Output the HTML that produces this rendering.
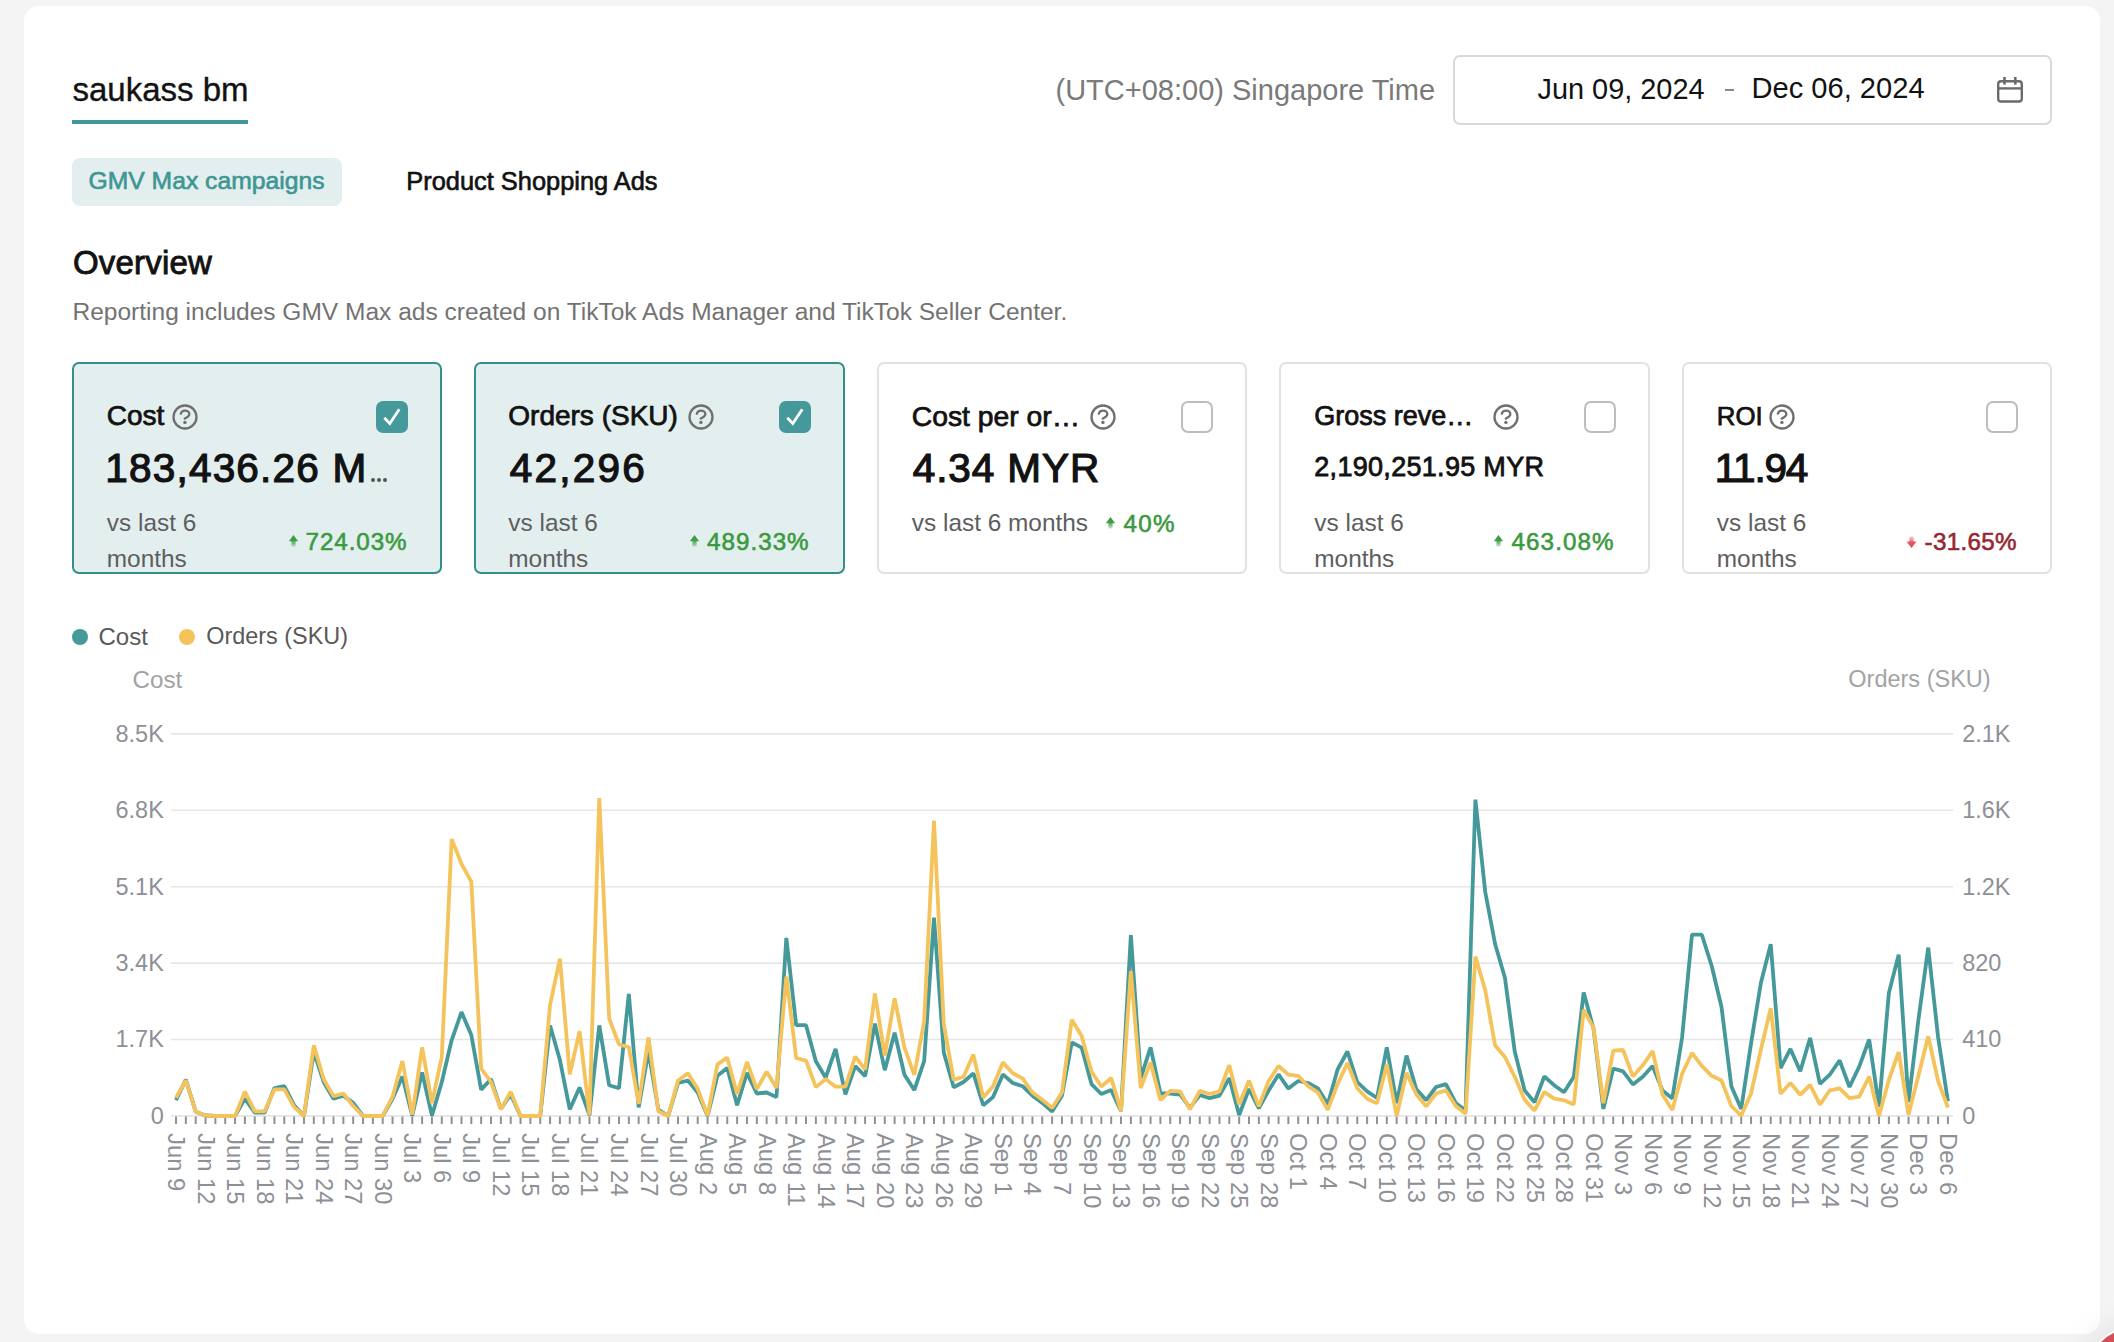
<!DOCTYPE html>
<html><head><meta charset="utf-8">
<style>
html,body{margin:0;padding:0;}
body{width:2114px;height:1342px;overflow:hidden;background:#f4f4f4;position:relative;font-family:"Liberation Sans", sans-serif;}
.t{position:absolute;line-height:1;white-space:nowrap;}
.card{position:absolute;left:24px;top:6px;width:2076px;height:1328px;border-radius:15px;background:#fff;}
.kpi{position:absolute;top:362px;height:212px;box-sizing:border-box;border-radius:7px;border:2px solid #e2e2e2;background:#fff;}
.kpi.sel{border-color:#358e8b;background:#e3efef;}
.cb{position:absolute;top:401px;width:32px;height:32px;box-sizing:border-box;border-radius:7px;}
.cb.on{background:#45999a;}
.cb.off{border:2px solid #bdbdbd;background:#fff;}
.q{position:absolute;top:404.5px;width:24.6px;height:24.6px;box-sizing:border-box;border:2px solid #6f6f6f;border-radius:50%;}
</style></head><body>
<div class="card"></div>
<div class="t" style="left:72.5px;top:73.3px;font-size:33px;color:#121212;font-weight:normal;-webkit-text-stroke:0.35px #121212;">saukass bm</div>
<div style="position:absolute;left:72px;top:120px;width:176px;height:4px;background:#41979a;"></div>
<div class="t" style="left:1055.5px;top:75.5px;font-size:29px;color:#7a7a7a;font-weight:normal;">(UTC+08:00) Singapore Time</div>
<div style="position:absolute;left:1452.5px;top:54.5px;width:599.5px;height:70.8px;box-sizing:border-box;border:2px solid #d9d9d9;border-radius:7px;"></div>
<div class="t" style="left:1537.5px;top:74.5px;font-size:28.9px;color:#121212;font-weight:normal;">Jun 09, 2024</div>
<div style="position:absolute;left:1725px;top:89.3px;width:9px;height:2.2px;background:#8a8a8a;"></div>
<div class="t" style="left:1751.5px;top:74.4px;font-size:29.1px;color:#121212;font-weight:normal;">Dec 06, 2024</div>
<svg style="position:absolute;left:1990px;top:70px" width="40" height="40" viewBox="1990 70 40 40">
<rect x="1998.2" y="81.2" width="23.6" height="20.3" rx="2.8" fill="none" stroke="#6b6b6b" stroke-width="2.4"/>
<line x1="1998" y1="88.4" x2="2022" y2="88.4" stroke="#6b6b6b" stroke-width="2.4"/>
<line x1="2004.5" y1="77" x2="2004.5" y2="84.6" stroke="#6b6b6b" stroke-width="2.6"/>
<line x1="2015.3" y1="77" x2="2015.3" y2="84.6" stroke="#6b6b6b" stroke-width="2.6"/>
</svg>
<div style="position:absolute;left:72px;top:158px;width:269.5px;height:48px;border-radius:8px;background:#e3efef;"></div>
<div class="t" style="left:88.5px;top:169.4px;font-size:24.7px;color:#3f9693;font-weight:normal;-webkit-text-stroke:0.65px #3f9693;">GMV Max campaigns</div>
<div class="t" style="left:406.3px;top:168.8px;font-size:25.4px;color:#121212;font-weight:normal;-webkit-text-stroke:0.65px #121212;">Product Shopping Ads</div>
<div class="t" style="left:73.0px;top:245.6px;font-size:33px;color:#121212;font-weight:normal;-webkit-text-stroke:0.9px #121212;letter-spacing:0.2px;">Overview</div>
<div class="t" style="left:72.5px;top:299.6px;font-size:24.53px;color:#737373;font-weight:normal;">Reporting includes GMV Max ads created on TikTok Ads Manager and TikTok Seller Center.</div>
<div class="kpi sel" style="left:72.0px;width:370.4px;"></div>
<div class="t" style="left:106.8px;top:402.0px;font-size:28px;color:#121212;font-weight:normal;-webkit-text-stroke:0.75px #121212;">Cost</div>
<svg style="position:absolute;left:169.90px;top:401.70px" width="30" height="30" viewBox="-15 -15 30 30"><circle cx="0" cy="0" r="11.5" fill="none" stroke="#6f6f6f" stroke-width="2.3"/><path d="M -4.2 -3.3 C -3.6 -5.6 -1.9 -6.3 0.1 -6.3 C 2.6 -6.3 4.3 -4.7 4.3 -2.8 C 4.3 -0.5 1.8 0.2 -0.3 1.6" fill="none" stroke="#6f6f6f" stroke-width="2.3" stroke-linecap="round"/><circle cx="-0.1" cy="5.4" r="1.7" fill="#6f6f6f"/></svg>
<div class="cb on" style="left:376.0px;"><svg width="32" height="32" viewBox="0 0 32 32" style="position:absolute;left:0;top:0"><path d="M8.3 16.7 L13.8 22.6 L23.3 8.3" fill="none" stroke="#fff" stroke-width="2.8" stroke-linecap="butt" stroke-linejoin="miter"/></svg></div>
<div class="kpi sel" style="left:474.4px;width:370.4px;"></div>
<div class="t" style="left:508.3px;top:402.0px;font-size:28px;color:#121212;font-weight:normal;-webkit-text-stroke:0.75px #121212;">Orders (SKU)</div>
<svg style="position:absolute;left:685.90px;top:401.70px" width="30" height="30" viewBox="-15 -15 30 30"><circle cx="0" cy="0" r="11.5" fill="none" stroke="#6f6f6f" stroke-width="2.3"/><path d="M -4.2 -3.3 C -3.6 -5.6 -1.9 -6.3 0.1 -6.3 C 2.6 -6.3 4.3 -4.7 4.3 -2.8 C 4.3 -0.5 1.8 0.2 -0.3 1.6" fill="none" stroke="#6f6f6f" stroke-width="2.3" stroke-linecap="round"/><circle cx="-0.1" cy="5.4" r="1.7" fill="#6f6f6f"/></svg>
<div class="cb on" style="left:778.8px;"><svg width="32" height="32" viewBox="0 0 32 32" style="position:absolute;left:0;top:0"><path d="M8.3 16.7 L13.8 22.6 L23.3 8.3" fill="none" stroke="#fff" stroke-width="2.8" stroke-linecap="butt" stroke-linejoin="miter"/></svg></div>
<div class="kpi" style="left:876.8px;width:370.4px;"></div>
<div class="t" style="left:911.8px;top:401.7px;font-size:28.3px;color:#121212;font-weight:normal;-webkit-text-stroke:0.75px #121212;">Cost per or…</div>
<svg style="position:absolute;left:1088.10px;top:401.70px" width="30" height="30" viewBox="-15 -15 30 30"><circle cx="0" cy="0" r="11.5" fill="none" stroke="#6f6f6f" stroke-width="2.3"/><path d="M -4.2 -3.3 C -3.6 -5.6 -1.9 -6.3 0.1 -6.3 C 2.6 -6.3 4.3 -4.7 4.3 -2.8 C 4.3 -0.5 1.8 0.2 -0.3 1.6" fill="none" stroke="#6f6f6f" stroke-width="2.3" stroke-linecap="round"/><circle cx="-0.1" cy="5.4" r="1.7" fill="#6f6f6f"/></svg>
<div class="cb off" style="left:1181.0px;"></div>
<div class="kpi" style="left:1279.2px;width:370.4px;"></div>
<div class="t" style="left:1314.3px;top:402.8px;font-size:27px;color:#121212;font-weight:normal;-webkit-text-stroke:0.75px #121212;">Gross reve…</div>
<svg style="position:absolute;left:1491.00px;top:401.70px" width="30" height="30" viewBox="-15 -15 30 30"><circle cx="0" cy="0" r="11.5" fill="none" stroke="#6f6f6f" stroke-width="2.3"/><path d="M -4.2 -3.3 C -3.6 -5.6 -1.9 -6.3 0.1 -6.3 C 2.6 -6.3 4.3 -4.7 4.3 -2.8 C 4.3 -0.5 1.8 0.2 -0.3 1.6" fill="none" stroke="#6f6f6f" stroke-width="2.3" stroke-linecap="round"/><circle cx="-0.1" cy="5.4" r="1.7" fill="#6f6f6f"/></svg>
<div class="cb off" style="left:1584.2px;"></div>
<div class="kpi" style="left:1681.6px;width:370.4px;"></div>
<div class="t" style="left:1716.8px;top:403.9px;font-size:25.8px;color:#121212;font-weight:normal;-webkit-text-stroke:0.75px #121212;">ROI</div>
<svg style="position:absolute;left:1767.00px;top:401.70px" width="30" height="30" viewBox="-15 -15 30 30"><circle cx="0" cy="0" r="11.5" fill="none" stroke="#6f6f6f" stroke-width="2.3"/><path d="M -4.2 -3.3 C -3.6 -5.6 -1.9 -6.3 0.1 -6.3 C 2.6 -6.3 4.3 -4.7 4.3 -2.8 C 4.3 -0.5 1.8 0.2 -0.3 1.6" fill="none" stroke="#6f6f6f" stroke-width="2.3" stroke-linecap="round"/><circle cx="-0.1" cy="5.4" r="1.7" fill="#6f6f6f"/></svg>
<div class="cb off" style="left:1986.2px;"></div>
<div class="t" style="left:105.3px;top:448.2px;font-size:40.5px;color:#121212;font-weight:normal;-webkit-text-stroke:1.2px #121212;letter-spacing:1.2px;">183,436.26 M</div>
<div class="t" style="left:509.8px;top:448.2px;font-size:40.5px;color:#121212;font-weight:normal;-webkit-text-stroke:1.2px #121212;letter-spacing:2.2px;">42,296</div>
<div class="t" style="left:912.8px;top:448.2px;font-size:40.5px;color:#121212;font-weight:normal;-webkit-text-stroke:1.2px #121212;letter-spacing:0.9px;">4.34 MYR</div>
<div class="t" style="left:1314.3px;top:453.9px;font-size:27px;color:#121212;font-weight:normal;-webkit-text-stroke:0.8px #121212;letter-spacing:0.3px;">2,190,251.95 MYR</div>
<div class="t" style="left:1714.8px;top:448.2px;font-size:40.5px;color:#121212;font-weight:normal;-webkit-text-stroke:1.2px #121212;letter-spacing:-1.2px;">11.94</div>
<div style="position:absolute;left:370.9px;top:478.3px;width:3.8px;height:3.8px;border-radius:50%;background:#555;"></div>
<div style="position:absolute;left:377.0px;top:478.3px;width:3.8px;height:3.8px;border-radius:50%;background:#555;"></div>
<div style="position:absolute;left:382.9px;top:478.3px;width:3.8px;height:3.8px;border-radius:50%;background:#555;"></div>
<div class="t" style="left:106.8px;top:510.9px;font-size:24.4px;color:#5e5e5e;font-weight:normal;">vs last 6</div>
<div class="t" style="left:106.8px;top:546.9px;font-size:24.4px;color:#5e5e5e;font-weight:normal;">months</div>
<div class="t" style="right:1706.6px;top:529.9px;font-size:24.2px;color:#3b9a40;font-weight:normal;text-align:right;-webkit-text-stroke:0.6px #3b9a40;letter-spacing:0.9px;">724.03%</div>
<svg style="position:absolute;left:288.4px;top:534.8px" width="11" height="12" viewBox="0 0 11 12"><defs><linearGradient id="g0" x1="0" y1="0" x2="0" y2="1"><stop offset="0.45" stop-color="#3e9c42"/><stop offset="1" stop-color="#3e9c42" stop-opacity="0.25"/></linearGradient></defs><path d="M5.5 0 L10.2 6.2 L7.6 6.2 L7.6 11.5 L3.4 11.5 L3.4 6.2 L0.8 6.2 Z" fill="url(#g0)"/></svg>
<div class="t" style="left:508.3px;top:510.9px;font-size:24.4px;color:#5e5e5e;font-weight:normal;">vs last 6</div>
<div class="t" style="left:508.3px;top:546.9px;font-size:24.4px;color:#5e5e5e;font-weight:normal;">months</div>
<div class="t" style="right:1304.4px;top:529.9px;font-size:24.2px;color:#3b9a40;font-weight:normal;text-align:right;-webkit-text-stroke:0.6px #3b9a40;letter-spacing:1.0px;">489.33%</div>
<svg style="position:absolute;left:688.6px;top:534.8px" width="11" height="12" viewBox="0 0 11 12"><defs><linearGradient id="g1" x1="0" y1="0" x2="0" y2="1"><stop offset="0.45" stop-color="#3e9c42"/><stop offset="1" stop-color="#3e9c42" stop-opacity="0.25"/></linearGradient></defs><path d="M5.5 0 L10.2 6.2 L7.6 6.2 L7.6 11.5 L3.4 11.5 L3.4 6.2 L0.8 6.2 Z" fill="url(#g1)"/></svg>
<div class="t" style="left:911.8px;top:510.9px;font-size:24.4px;color:#5e5e5e;font-weight:normal;">vs last 6 months</div>
<div class="t" style="left:1123.6px;top:511.9px;font-size:24.2px;color:#3b9a40;font-weight:normal;-webkit-text-stroke:0.6px #3b9a40;letter-spacing:1.3px;">40%</div>
<svg style="position:absolute;left:1105.4px;top:516.5px" width="11" height="12" viewBox="0 0 11 12"><defs><linearGradient id="g2" x1="0" y1="0" x2="0" y2="1"><stop offset="0.45" stop-color="#3e9c42"/><stop offset="1" stop-color="#3e9c42" stop-opacity="0.25"/></linearGradient></defs><path d="M5.5 0 L10.2 6.2 L7.6 6.2 L7.6 11.5 L3.4 11.5 L3.4 6.2 L0.8 6.2 Z" fill="url(#g2)"/></svg>
<div class="t" style="left:1314.3px;top:510.9px;font-size:24.4px;color:#5e5e5e;font-weight:normal;">vs last 6</div>
<div class="t" style="left:1314.3px;top:546.9px;font-size:24.4px;color:#5e5e5e;font-weight:normal;">months</div>
<div class="t" style="right:499.3px;top:529.9px;font-size:24.2px;color:#3b9a40;font-weight:normal;text-align:right;-webkit-text-stroke:0.6px #3b9a40;letter-spacing:1.1px;">463.08%</div>
<svg style="position:absolute;left:1492.5px;top:534.8px" width="11" height="12" viewBox="0 0 11 12"><defs><linearGradient id="g3" x1="0" y1="0" x2="0" y2="1"><stop offset="0.45" stop-color="#3e9c42"/><stop offset="1" stop-color="#3e9c42" stop-opacity="0.25"/></linearGradient></defs><path d="M5.5 0 L10.2 6.2 L7.6 6.2 L7.6 11.5 L3.4 11.5 L3.4 6.2 L0.8 6.2 Z" fill="url(#g3)"/></svg>
<div class="t" style="left:1716.8px;top:510.9px;font-size:24.4px;color:#5e5e5e;font-weight:normal;">vs last 6</div>
<div class="t" style="left:1716.8px;top:546.9px;font-size:24.4px;color:#5e5e5e;font-weight:normal;">months</div>
<div class="t" style="right:97.2px;top:529.9px;font-size:24.2px;color:#962730;font-weight:normal;text-align:right;-webkit-text-stroke:0.6px #962730;letter-spacing:0.3px;">-31.65%</div>
<svg style="position:absolute;left:1905.6px;top:535.8px" width="11" height="12" viewBox="0 0 11 12"><defs><linearGradient id="g4" x1="0" y1="1" x2="0" y2="0"><stop offset="0.45" stop-color="#e0525b"/><stop offset="1" stop-color="#e0525b" stop-opacity="0.25"/></linearGradient></defs><path d="M5.5 12 L10.5 5.5 L7.6 5.5 L7.6 0.5 L3.4 0.5 L3.4 5.5 L0.5 5.5 Z" fill="url(#g4)"/></svg>
<div style="position:absolute;left:71.9px;top:628.9px;width:16px;height:16px;border-radius:50%;background:#45999a;"></div>
<div class="t" style="left:98.5px;top:624.7px;font-size:24px;color:#595959;font-weight:normal;">Cost</div>
<div style="position:absolute;left:178.8px;top:628.9px;width:16px;height:16px;border-radius:50%;background:#f5c35c;"></div>
<div class="t" style="left:206.3px;top:625.2px;font-size:23.4px;color:#595959;font-weight:normal;">Orders (SKU)</div>
<div class="t" style="left:132.5px;top:667.5px;font-size:24.2px;color:#a3a3a3;font-weight:normal;">Cost</div>
<div class="t" style="left:1848.3px;top:668.2px;font-size:23.5px;color:#a3a3a3;font-weight:normal;">Orders (SKU)</div>
<svg style="position:absolute;left:0;top:0" width="2114" height="1342" viewBox="0 0 2114 1342">
<line x1="171" y1="733.9" x2="1953" y2="733.9" stroke="#e6e6e6" stroke-width="1.6"/>
<line x1="171" y1="810.3" x2="1953" y2="810.3" stroke="#e6e6e6" stroke-width="1.6"/>
<line x1="171" y1="886.7" x2="1953" y2="886.7" stroke="#e6e6e6" stroke-width="1.6"/>
<line x1="171" y1="963.1" x2="1953" y2="963.1" stroke="#e6e6e6" stroke-width="1.6"/>
<line x1="171" y1="1039.5" x2="1953" y2="1039.5" stroke="#e6e6e6" stroke-width="1.6"/>
<line x1="171" y1="1115.9" x2="1953" y2="1115.9" stroke="#e6e6e6" stroke-width="1.6"/>
<line x1="176.00" y1="1116.5" x2="176.00" y2="1124" stroke="#8e9096" stroke-width="2"/>
<line x1="185.84" y1="1116.5" x2="185.84" y2="1124" stroke="#8e9096" stroke-width="2"/>
<line x1="195.69" y1="1116.5" x2="195.69" y2="1124" stroke="#8e9096" stroke-width="2"/>
<line x1="205.53" y1="1116.5" x2="205.53" y2="1124" stroke="#8e9096" stroke-width="2"/>
<line x1="215.38" y1="1116.5" x2="215.38" y2="1124" stroke="#8e9096" stroke-width="2"/>
<line x1="225.22" y1="1116.5" x2="225.22" y2="1124" stroke="#8e9096" stroke-width="2"/>
<line x1="235.06" y1="1116.5" x2="235.06" y2="1124" stroke="#8e9096" stroke-width="2"/>
<line x1="244.91" y1="1116.5" x2="244.91" y2="1124" stroke="#8e9096" stroke-width="2"/>
<line x1="254.75" y1="1116.5" x2="254.75" y2="1124" stroke="#8e9096" stroke-width="2"/>
<line x1="264.60" y1="1116.5" x2="264.60" y2="1124" stroke="#8e9096" stroke-width="2"/>
<line x1="274.44" y1="1116.5" x2="274.44" y2="1124" stroke="#8e9096" stroke-width="2"/>
<line x1="284.28" y1="1116.5" x2="284.28" y2="1124" stroke="#8e9096" stroke-width="2"/>
<line x1="294.13" y1="1116.5" x2="294.13" y2="1124" stroke="#8e9096" stroke-width="2"/>
<line x1="303.97" y1="1116.5" x2="303.97" y2="1124" stroke="#8e9096" stroke-width="2"/>
<line x1="313.82" y1="1116.5" x2="313.82" y2="1124" stroke="#8e9096" stroke-width="2"/>
<line x1="323.66" y1="1116.5" x2="323.66" y2="1124" stroke="#8e9096" stroke-width="2"/>
<line x1="333.50" y1="1116.5" x2="333.50" y2="1124" stroke="#8e9096" stroke-width="2"/>
<line x1="343.35" y1="1116.5" x2="343.35" y2="1124" stroke="#8e9096" stroke-width="2"/>
<line x1="353.19" y1="1116.5" x2="353.19" y2="1124" stroke="#8e9096" stroke-width="2"/>
<line x1="363.04" y1="1116.5" x2="363.04" y2="1124" stroke="#8e9096" stroke-width="2"/>
<line x1="372.88" y1="1116.5" x2="372.88" y2="1124" stroke="#8e9096" stroke-width="2"/>
<line x1="382.72" y1="1116.5" x2="382.72" y2="1124" stroke="#8e9096" stroke-width="2"/>
<line x1="392.57" y1="1116.5" x2="392.57" y2="1124" stroke="#8e9096" stroke-width="2"/>
<line x1="402.41" y1="1116.5" x2="402.41" y2="1124" stroke="#8e9096" stroke-width="2"/>
<line x1="412.26" y1="1116.5" x2="412.26" y2="1124" stroke="#8e9096" stroke-width="2"/>
<line x1="422.10" y1="1116.5" x2="422.10" y2="1124" stroke="#8e9096" stroke-width="2"/>
<line x1="431.94" y1="1116.5" x2="431.94" y2="1124" stroke="#8e9096" stroke-width="2"/>
<line x1="441.79" y1="1116.5" x2="441.79" y2="1124" stroke="#8e9096" stroke-width="2"/>
<line x1="451.63" y1="1116.5" x2="451.63" y2="1124" stroke="#8e9096" stroke-width="2"/>
<line x1="461.48" y1="1116.5" x2="461.48" y2="1124" stroke="#8e9096" stroke-width="2"/>
<line x1="471.32" y1="1116.5" x2="471.32" y2="1124" stroke="#8e9096" stroke-width="2"/>
<line x1="481.16" y1="1116.5" x2="481.16" y2="1124" stroke="#8e9096" stroke-width="2"/>
<line x1="491.01" y1="1116.5" x2="491.01" y2="1124" stroke="#8e9096" stroke-width="2"/>
<line x1="500.85" y1="1116.5" x2="500.85" y2="1124" stroke="#8e9096" stroke-width="2"/>
<line x1="510.70" y1="1116.5" x2="510.70" y2="1124" stroke="#8e9096" stroke-width="2"/>
<line x1="520.54" y1="1116.5" x2="520.54" y2="1124" stroke="#8e9096" stroke-width="2"/>
<line x1="530.38" y1="1116.5" x2="530.38" y2="1124" stroke="#8e9096" stroke-width="2"/>
<line x1="540.23" y1="1116.5" x2="540.23" y2="1124" stroke="#8e9096" stroke-width="2"/>
<line x1="550.07" y1="1116.5" x2="550.07" y2="1124" stroke="#8e9096" stroke-width="2"/>
<line x1="559.92" y1="1116.5" x2="559.92" y2="1124" stroke="#8e9096" stroke-width="2"/>
<line x1="569.76" y1="1116.5" x2="569.76" y2="1124" stroke="#8e9096" stroke-width="2"/>
<line x1="579.60" y1="1116.5" x2="579.60" y2="1124" stroke="#8e9096" stroke-width="2"/>
<line x1="589.45" y1="1116.5" x2="589.45" y2="1124" stroke="#8e9096" stroke-width="2"/>
<line x1="599.29" y1="1116.5" x2="599.29" y2="1124" stroke="#8e9096" stroke-width="2"/>
<line x1="609.14" y1="1116.5" x2="609.14" y2="1124" stroke="#8e9096" stroke-width="2"/>
<line x1="618.98" y1="1116.5" x2="618.98" y2="1124" stroke="#8e9096" stroke-width="2"/>
<line x1="628.82" y1="1116.5" x2="628.82" y2="1124" stroke="#8e9096" stroke-width="2"/>
<line x1="638.67" y1="1116.5" x2="638.67" y2="1124" stroke="#8e9096" stroke-width="2"/>
<line x1="648.51" y1="1116.5" x2="648.51" y2="1124" stroke="#8e9096" stroke-width="2"/>
<line x1="658.36" y1="1116.5" x2="658.36" y2="1124" stroke="#8e9096" stroke-width="2"/>
<line x1="668.20" y1="1116.5" x2="668.20" y2="1124" stroke="#8e9096" stroke-width="2"/>
<line x1="678.04" y1="1116.5" x2="678.04" y2="1124" stroke="#8e9096" stroke-width="2"/>
<line x1="687.89" y1="1116.5" x2="687.89" y2="1124" stroke="#8e9096" stroke-width="2"/>
<line x1="697.73" y1="1116.5" x2="697.73" y2="1124" stroke="#8e9096" stroke-width="2"/>
<line x1="707.58" y1="1116.5" x2="707.58" y2="1124" stroke="#8e9096" stroke-width="2"/>
<line x1="717.42" y1="1116.5" x2="717.42" y2="1124" stroke="#8e9096" stroke-width="2"/>
<line x1="727.26" y1="1116.5" x2="727.26" y2="1124" stroke="#8e9096" stroke-width="2"/>
<line x1="737.11" y1="1116.5" x2="737.11" y2="1124" stroke="#8e9096" stroke-width="2"/>
<line x1="746.95" y1="1116.5" x2="746.95" y2="1124" stroke="#8e9096" stroke-width="2"/>
<line x1="756.80" y1="1116.5" x2="756.80" y2="1124" stroke="#8e9096" stroke-width="2"/>
<line x1="766.64" y1="1116.5" x2="766.64" y2="1124" stroke="#8e9096" stroke-width="2"/>
<line x1="776.48" y1="1116.5" x2="776.48" y2="1124" stroke="#8e9096" stroke-width="2"/>
<line x1="786.33" y1="1116.5" x2="786.33" y2="1124" stroke="#8e9096" stroke-width="2"/>
<line x1="796.17" y1="1116.5" x2="796.17" y2="1124" stroke="#8e9096" stroke-width="2"/>
<line x1="806.02" y1="1116.5" x2="806.02" y2="1124" stroke="#8e9096" stroke-width="2"/>
<line x1="815.86" y1="1116.5" x2="815.86" y2="1124" stroke="#8e9096" stroke-width="2"/>
<line x1="825.70" y1="1116.5" x2="825.70" y2="1124" stroke="#8e9096" stroke-width="2"/>
<line x1="835.55" y1="1116.5" x2="835.55" y2="1124" stroke="#8e9096" stroke-width="2"/>
<line x1="845.39" y1="1116.5" x2="845.39" y2="1124" stroke="#8e9096" stroke-width="2"/>
<line x1="855.24" y1="1116.5" x2="855.24" y2="1124" stroke="#8e9096" stroke-width="2"/>
<line x1="865.08" y1="1116.5" x2="865.08" y2="1124" stroke="#8e9096" stroke-width="2"/>
<line x1="874.92" y1="1116.5" x2="874.92" y2="1124" stroke="#8e9096" stroke-width="2"/>
<line x1="884.77" y1="1116.5" x2="884.77" y2="1124" stroke="#8e9096" stroke-width="2"/>
<line x1="894.61" y1="1116.5" x2="894.61" y2="1124" stroke="#8e9096" stroke-width="2"/>
<line x1="904.46" y1="1116.5" x2="904.46" y2="1124" stroke="#8e9096" stroke-width="2"/>
<line x1="914.30" y1="1116.5" x2="914.30" y2="1124" stroke="#8e9096" stroke-width="2"/>
<line x1="924.14" y1="1116.5" x2="924.14" y2="1124" stroke="#8e9096" stroke-width="2"/>
<line x1="933.99" y1="1116.5" x2="933.99" y2="1124" stroke="#8e9096" stroke-width="2"/>
<line x1="943.83" y1="1116.5" x2="943.83" y2="1124" stroke="#8e9096" stroke-width="2"/>
<line x1="953.68" y1="1116.5" x2="953.68" y2="1124" stroke="#8e9096" stroke-width="2"/>
<line x1="963.52" y1="1116.5" x2="963.52" y2="1124" stroke="#8e9096" stroke-width="2"/>
<line x1="973.36" y1="1116.5" x2="973.36" y2="1124" stroke="#8e9096" stroke-width="2"/>
<line x1="983.21" y1="1116.5" x2="983.21" y2="1124" stroke="#8e9096" stroke-width="2"/>
<line x1="993.05" y1="1116.5" x2="993.05" y2="1124" stroke="#8e9096" stroke-width="2"/>
<line x1="1002.90" y1="1116.5" x2="1002.90" y2="1124" stroke="#8e9096" stroke-width="2"/>
<line x1="1012.74" y1="1116.5" x2="1012.74" y2="1124" stroke="#8e9096" stroke-width="2"/>
<line x1="1022.58" y1="1116.5" x2="1022.58" y2="1124" stroke="#8e9096" stroke-width="2"/>
<line x1="1032.43" y1="1116.5" x2="1032.43" y2="1124" stroke="#8e9096" stroke-width="2"/>
<line x1="1042.27" y1="1116.5" x2="1042.27" y2="1124" stroke="#8e9096" stroke-width="2"/>
<line x1="1052.12" y1="1116.5" x2="1052.12" y2="1124" stroke="#8e9096" stroke-width="2"/>
<line x1="1061.96" y1="1116.5" x2="1061.96" y2="1124" stroke="#8e9096" stroke-width="2"/>
<line x1="1071.80" y1="1116.5" x2="1071.80" y2="1124" stroke="#8e9096" stroke-width="2"/>
<line x1="1081.65" y1="1116.5" x2="1081.65" y2="1124" stroke="#8e9096" stroke-width="2"/>
<line x1="1091.49" y1="1116.5" x2="1091.49" y2="1124" stroke="#8e9096" stroke-width="2"/>
<line x1="1101.34" y1="1116.5" x2="1101.34" y2="1124" stroke="#8e9096" stroke-width="2"/>
<line x1="1111.18" y1="1116.5" x2="1111.18" y2="1124" stroke="#8e9096" stroke-width="2"/>
<line x1="1121.02" y1="1116.5" x2="1121.02" y2="1124" stroke="#8e9096" stroke-width="2"/>
<line x1="1130.87" y1="1116.5" x2="1130.87" y2="1124" stroke="#8e9096" stroke-width="2"/>
<line x1="1140.71" y1="1116.5" x2="1140.71" y2="1124" stroke="#8e9096" stroke-width="2"/>
<line x1="1150.56" y1="1116.5" x2="1150.56" y2="1124" stroke="#8e9096" stroke-width="2"/>
<line x1="1160.40" y1="1116.5" x2="1160.40" y2="1124" stroke="#8e9096" stroke-width="2"/>
<line x1="1170.24" y1="1116.5" x2="1170.24" y2="1124" stroke="#8e9096" stroke-width="2"/>
<line x1="1180.09" y1="1116.5" x2="1180.09" y2="1124" stroke="#8e9096" stroke-width="2"/>
<line x1="1189.93" y1="1116.5" x2="1189.93" y2="1124" stroke="#8e9096" stroke-width="2"/>
<line x1="1199.78" y1="1116.5" x2="1199.78" y2="1124" stroke="#8e9096" stroke-width="2"/>
<line x1="1209.62" y1="1116.5" x2="1209.62" y2="1124" stroke="#8e9096" stroke-width="2"/>
<line x1="1219.46" y1="1116.5" x2="1219.46" y2="1124" stroke="#8e9096" stroke-width="2"/>
<line x1="1229.31" y1="1116.5" x2="1229.31" y2="1124" stroke="#8e9096" stroke-width="2"/>
<line x1="1239.15" y1="1116.5" x2="1239.15" y2="1124" stroke="#8e9096" stroke-width="2"/>
<line x1="1249.00" y1="1116.5" x2="1249.00" y2="1124" stroke="#8e9096" stroke-width="2"/>
<line x1="1258.84" y1="1116.5" x2="1258.84" y2="1124" stroke="#8e9096" stroke-width="2"/>
<line x1="1268.68" y1="1116.5" x2="1268.68" y2="1124" stroke="#8e9096" stroke-width="2"/>
<line x1="1278.53" y1="1116.5" x2="1278.53" y2="1124" stroke="#8e9096" stroke-width="2"/>
<line x1="1288.37" y1="1116.5" x2="1288.37" y2="1124" stroke="#8e9096" stroke-width="2"/>
<line x1="1298.22" y1="1116.5" x2="1298.22" y2="1124" stroke="#8e9096" stroke-width="2"/>
<line x1="1308.06" y1="1116.5" x2="1308.06" y2="1124" stroke="#8e9096" stroke-width="2"/>
<line x1="1317.90" y1="1116.5" x2="1317.90" y2="1124" stroke="#8e9096" stroke-width="2"/>
<line x1="1327.75" y1="1116.5" x2="1327.75" y2="1124" stroke="#8e9096" stroke-width="2"/>
<line x1="1337.59" y1="1116.5" x2="1337.59" y2="1124" stroke="#8e9096" stroke-width="2"/>
<line x1="1347.44" y1="1116.5" x2="1347.44" y2="1124" stroke="#8e9096" stroke-width="2"/>
<line x1="1357.28" y1="1116.5" x2="1357.28" y2="1124" stroke="#8e9096" stroke-width="2"/>
<line x1="1367.12" y1="1116.5" x2="1367.12" y2="1124" stroke="#8e9096" stroke-width="2"/>
<line x1="1376.97" y1="1116.5" x2="1376.97" y2="1124" stroke="#8e9096" stroke-width="2"/>
<line x1="1386.81" y1="1116.5" x2="1386.81" y2="1124" stroke="#8e9096" stroke-width="2"/>
<line x1="1396.66" y1="1116.5" x2="1396.66" y2="1124" stroke="#8e9096" stroke-width="2"/>
<line x1="1406.50" y1="1116.5" x2="1406.50" y2="1124" stroke="#8e9096" stroke-width="2"/>
<line x1="1416.34" y1="1116.5" x2="1416.34" y2="1124" stroke="#8e9096" stroke-width="2"/>
<line x1="1426.19" y1="1116.5" x2="1426.19" y2="1124" stroke="#8e9096" stroke-width="2"/>
<line x1="1436.03" y1="1116.5" x2="1436.03" y2="1124" stroke="#8e9096" stroke-width="2"/>
<line x1="1445.88" y1="1116.5" x2="1445.88" y2="1124" stroke="#8e9096" stroke-width="2"/>
<line x1="1455.72" y1="1116.5" x2="1455.72" y2="1124" stroke="#8e9096" stroke-width="2"/>
<line x1="1465.56" y1="1116.5" x2="1465.56" y2="1124" stroke="#8e9096" stroke-width="2"/>
<line x1="1475.41" y1="1116.5" x2="1475.41" y2="1124" stroke="#8e9096" stroke-width="2"/>
<line x1="1485.25" y1="1116.5" x2="1485.25" y2="1124" stroke="#8e9096" stroke-width="2"/>
<line x1="1495.10" y1="1116.5" x2="1495.10" y2="1124" stroke="#8e9096" stroke-width="2"/>
<line x1="1504.94" y1="1116.5" x2="1504.94" y2="1124" stroke="#8e9096" stroke-width="2"/>
<line x1="1514.78" y1="1116.5" x2="1514.78" y2="1124" stroke="#8e9096" stroke-width="2"/>
<line x1="1524.63" y1="1116.5" x2="1524.63" y2="1124" stroke="#8e9096" stroke-width="2"/>
<line x1="1534.47" y1="1116.5" x2="1534.47" y2="1124" stroke="#8e9096" stroke-width="2"/>
<line x1="1544.32" y1="1116.5" x2="1544.32" y2="1124" stroke="#8e9096" stroke-width="2"/>
<line x1="1554.16" y1="1116.5" x2="1554.16" y2="1124" stroke="#8e9096" stroke-width="2"/>
<line x1="1564.00" y1="1116.5" x2="1564.00" y2="1124" stroke="#8e9096" stroke-width="2"/>
<line x1="1573.85" y1="1116.5" x2="1573.85" y2="1124" stroke="#8e9096" stroke-width="2"/>
<line x1="1583.69" y1="1116.5" x2="1583.69" y2="1124" stroke="#8e9096" stroke-width="2"/>
<line x1="1593.54" y1="1116.5" x2="1593.54" y2="1124" stroke="#8e9096" stroke-width="2"/>
<line x1="1603.38" y1="1116.5" x2="1603.38" y2="1124" stroke="#8e9096" stroke-width="2"/>
<line x1="1613.22" y1="1116.5" x2="1613.22" y2="1124" stroke="#8e9096" stroke-width="2"/>
<line x1="1623.07" y1="1116.5" x2="1623.07" y2="1124" stroke="#8e9096" stroke-width="2"/>
<line x1="1632.91" y1="1116.5" x2="1632.91" y2="1124" stroke="#8e9096" stroke-width="2"/>
<line x1="1642.76" y1="1116.5" x2="1642.76" y2="1124" stroke="#8e9096" stroke-width="2"/>
<line x1="1652.60" y1="1116.5" x2="1652.60" y2="1124" stroke="#8e9096" stroke-width="2"/>
<line x1="1662.44" y1="1116.5" x2="1662.44" y2="1124" stroke="#8e9096" stroke-width="2"/>
<line x1="1672.29" y1="1116.5" x2="1672.29" y2="1124" stroke="#8e9096" stroke-width="2"/>
<line x1="1682.13" y1="1116.5" x2="1682.13" y2="1124" stroke="#8e9096" stroke-width="2"/>
<line x1="1691.98" y1="1116.5" x2="1691.98" y2="1124" stroke="#8e9096" stroke-width="2"/>
<line x1="1701.82" y1="1116.5" x2="1701.82" y2="1124" stroke="#8e9096" stroke-width="2"/>
<line x1="1711.66" y1="1116.5" x2="1711.66" y2="1124" stroke="#8e9096" stroke-width="2"/>
<line x1="1721.51" y1="1116.5" x2="1721.51" y2="1124" stroke="#8e9096" stroke-width="2"/>
<line x1="1731.35" y1="1116.5" x2="1731.35" y2="1124" stroke="#8e9096" stroke-width="2"/>
<line x1="1741.20" y1="1116.5" x2="1741.20" y2="1124" stroke="#8e9096" stroke-width="2"/>
<line x1="1751.04" y1="1116.5" x2="1751.04" y2="1124" stroke="#8e9096" stroke-width="2"/>
<line x1="1760.88" y1="1116.5" x2="1760.88" y2="1124" stroke="#8e9096" stroke-width="2"/>
<line x1="1770.73" y1="1116.5" x2="1770.73" y2="1124" stroke="#8e9096" stroke-width="2"/>
<line x1="1780.57" y1="1116.5" x2="1780.57" y2="1124" stroke="#8e9096" stroke-width="2"/>
<line x1="1790.42" y1="1116.5" x2="1790.42" y2="1124" stroke="#8e9096" stroke-width="2"/>
<line x1="1800.26" y1="1116.5" x2="1800.26" y2="1124" stroke="#8e9096" stroke-width="2"/>
<line x1="1810.10" y1="1116.5" x2="1810.10" y2="1124" stroke="#8e9096" stroke-width="2"/>
<line x1="1819.95" y1="1116.5" x2="1819.95" y2="1124" stroke="#8e9096" stroke-width="2"/>
<line x1="1829.79" y1="1116.5" x2="1829.79" y2="1124" stroke="#8e9096" stroke-width="2"/>
<line x1="1839.64" y1="1116.5" x2="1839.64" y2="1124" stroke="#8e9096" stroke-width="2"/>
<line x1="1849.48" y1="1116.5" x2="1849.48" y2="1124" stroke="#8e9096" stroke-width="2"/>
<line x1="1859.32" y1="1116.5" x2="1859.32" y2="1124" stroke="#8e9096" stroke-width="2"/>
<line x1="1869.17" y1="1116.5" x2="1869.17" y2="1124" stroke="#8e9096" stroke-width="2"/>
<line x1="1879.01" y1="1116.5" x2="1879.01" y2="1124" stroke="#8e9096" stroke-width="2"/>
<line x1="1888.86" y1="1116.5" x2="1888.86" y2="1124" stroke="#8e9096" stroke-width="2"/>
<line x1="1898.70" y1="1116.5" x2="1898.70" y2="1124" stroke="#8e9096" stroke-width="2"/>
<line x1="1908.54" y1="1116.5" x2="1908.54" y2="1124" stroke="#8e9096" stroke-width="2"/>
<line x1="1918.39" y1="1116.5" x2="1918.39" y2="1124" stroke="#8e9096" stroke-width="2"/>
<line x1="1928.23" y1="1116.5" x2="1928.23" y2="1124" stroke="#8e9096" stroke-width="2"/>
<line x1="1938.08" y1="1116.5" x2="1938.08" y2="1124" stroke="#8e9096" stroke-width="2"/>
<line x1="1947.92" y1="1116.5" x2="1947.92" y2="1124" stroke="#8e9096" stroke-width="2"/>
<polyline points="176.00,1100.1 185.84,1079.6 195.69,1111.7 205.53,1115.5 215.38,1116.0 225.22,1116.0 235.06,1116.0 244.91,1098.6 254.75,1112.7 264.60,1112.7 274.44,1088.0 284.28,1086.1 294.13,1105.2 303.97,1116.0 313.82,1052.0 323.66,1082.0 333.50,1098.7 343.35,1095.6 353.19,1102.9 363.04,1116.0 372.88,1116.0 382.72,1116.0 392.57,1098.7 402.41,1076.5 412.26,1115.8 422.10,1072.3 431.94,1115.6 441.79,1082.0 451.63,1040.3 461.48,1012.1 471.32,1035.1 481.16,1089.6 491.01,1079.1 500.85,1109.0 510.70,1094.2 520.54,1116.0 530.38,1116.0 540.23,1116.0 550.07,1025.4 559.92,1060.1 569.76,1109.4 579.60,1087.5 589.45,1115.2 599.29,1025.4 609.14,1085.2 618.98,1088.2 628.82,993.9 638.67,1107.4 648.51,1051.4 658.36,1109.7 668.20,1116.0 678.04,1083.0 687.89,1080.5 697.73,1092.5 707.58,1116.0 717.42,1075.8 727.26,1068.1 737.11,1105.2 746.95,1072.9 756.80,1093.5 766.64,1092.5 776.48,1097.1 786.33,937.9 796.17,1025.2 806.02,1025.2 815.86,1061.2 825.70,1077.7 835.55,1048.9 845.39,1094.3 855.24,1066.0 865.08,1076.1 874.92,1023.6 884.77,1070.2 894.61,1032.8 904.46,1074.7 914.30,1090.1 924.14,1061.2 933.99,917.6 943.83,1052.8 953.68,1087.2 963.52,1082.0 973.36,1073.3 983.21,1105.2 993.05,1097.1 1002.90,1074.4 1012.74,1083.0 1022.58,1086.2 1032.43,1095.6 1042.27,1102.9 1052.12,1111.6 1061.96,1095.6 1071.80,1042.4 1081.65,1047.6 1091.49,1084.1 1101.34,1094.0 1111.18,1089.9 1121.02,1111.1 1130.87,935.1 1140.71,1078.2 1150.56,1047.4 1160.40,1093.5 1170.24,1093.5 1180.09,1094.5 1189.93,1107.9 1199.78,1095.0 1209.62,1098.2 1219.46,1095.6 1229.31,1078.1 1239.15,1115.1 1249.00,1089.0 1258.84,1108.4 1268.68,1090.4 1278.53,1074.4 1288.37,1088.6 1298.22,1081.0 1308.06,1083.0 1317.90,1088.3 1327.75,1104.2 1337.59,1069.5 1347.44,1051.5 1357.28,1082.0 1367.12,1091.4 1376.97,1098.0 1386.81,1047.3 1396.66,1103.2 1406.50,1055.6 1416.34,1089.3 1426.19,1100.1 1436.03,1087.0 1445.88,1084.1 1455.72,1102.9 1465.56,1110.6 1475.41,799.6 1485.25,892.0 1495.10,944.0 1504.94,977.8 1514.78,1051.8 1524.63,1090.4 1534.47,1102.2 1544.32,1076.5 1554.16,1085.2 1564.00,1092.3 1573.85,1076.8 1583.69,992.5 1593.54,1028.8 1603.38,1108.9 1613.22,1068.5 1623.07,1071.3 1632.91,1084.4 1642.76,1076.8 1652.60,1066.0 1662.44,1090.4 1672.29,1098.5 1682.13,1037.2 1691.98,934.7 1701.82,934.7 1711.66,965.8 1721.51,1007.0 1731.35,1086.2 1741.20,1109.0 1751.04,1043.4 1760.88,983.0 1770.73,944.1 1780.57,1068.2 1790.42,1048.9 1800.26,1071.3 1810.10,1038.0 1819.95,1083.9 1829.79,1074.7 1839.64,1060.3 1849.48,1087.0 1859.32,1066.4 1869.17,1039.5 1879.01,1106.8 1888.86,993.0 1898.70,954.6 1908.54,1102.1 1918.39,1020.0 1928.23,947.6 1938.08,1037.0 1947.92,1101.2" fill="none" stroke="#45999a" stroke-width="3.8" stroke-linejoin="bevel"/>
<polyline points="176.00,1097.8 185.84,1080.4 195.69,1111.7 205.53,1115.5 215.38,1116.0 225.22,1116.0 235.06,1116.0 244.91,1091.7 254.75,1111.3 264.60,1111.3 274.44,1089.4 284.28,1089.4 294.13,1107.1 303.97,1116.0 313.82,1045.2 323.66,1079.0 333.50,1096.1 343.35,1093.5 353.19,1106.0 363.04,1116.0 372.88,1116.0 382.72,1116.0 392.57,1096.6 402.41,1061.0 412.26,1114.7 422.10,1047.4 431.94,1103.1 441.79,1057.0 451.63,839.1 461.48,863.8 471.32,881.7 481.16,1068.5 491.01,1082.0 500.85,1109.4 510.70,1091.6 520.54,1116.0 530.38,1116.0 540.23,1116.0 550.07,1004.8 559.92,958.6 569.76,1074.3 579.60,1031.1 589.45,1114.7 599.29,798.1 609.14,1018.4 618.98,1044.5 628.82,1047.1 638.67,1103.8 648.51,1037.4 658.36,1111.2 668.20,1116.0 678.04,1080.5 687.89,1073.3 697.73,1088.8 707.58,1115.7 717.42,1064.3 727.26,1057.7 737.11,1094.0 746.95,1062.0 756.80,1089.1 766.64,1071.8 776.48,1088.1 786.33,976.6 796.17,1058.0 806.02,1060.6 815.86,1087.1 825.70,1079.1 835.55,1086.7 845.39,1086.7 855.24,1056.6 865.08,1069.4 874.92,993.6 884.77,1055.6 894.61,998.3 904.46,1047.6 914.30,1074.9 924.14,1021.5 933.99,820.6 943.83,1024.6 953.68,1079.9 963.52,1076.8 973.36,1054.6 983.21,1097.4 993.05,1086.2 1002.90,1062.4 1012.74,1073.2 1022.58,1078.4 1032.43,1092.5 1042.27,1099.8 1052.12,1107.9 1061.96,1092.5 1071.80,1019.7 1081.65,1036.1 1091.49,1071.6 1101.34,1086.5 1111.18,1078.0 1121.02,1111.1 1130.87,971.1 1140.71,1088.1 1150.56,1062.4 1160.40,1100.1 1170.24,1090.9 1180.09,1091.4 1189.93,1109.4 1199.78,1090.9 1209.62,1094.0 1219.46,1091.4 1229.31,1065.1 1239.15,1104.2 1249.00,1080.6 1258.84,1106.3 1268.68,1081.0 1278.53,1066.0 1288.37,1074.7 1298.22,1075.8 1308.06,1086.2 1317.90,1092.5 1327.75,1109.9 1337.59,1084.1 1347.44,1063.0 1357.28,1088.3 1367.12,1098.7 1376.97,1103.4 1386.81,1064.5 1396.66,1116.0 1406.50,1072.9 1416.34,1094.5 1426.19,1106.3 1436.03,1093.5 1445.88,1090.4 1455.72,1106.0 1465.56,1113.7 1475.41,956.6 1485.25,990.2 1495.10,1045.5 1504.94,1057.0 1514.78,1076.8 1524.63,1099.8 1534.47,1110.5 1544.32,1092.1 1554.16,1098.7 1564.00,1100.3 1573.85,1104.4 1583.69,1009.8 1593.54,1027.8 1603.38,1103.2 1613.22,1050.7 1623.07,1050.0 1632.91,1076.6 1642.76,1065.3 1652.60,1051.0 1662.44,1094.5 1672.29,1109.9 1682.13,1073.7 1691.98,1053.0 1701.82,1065.9 1711.66,1075.8 1721.51,1080.5 1731.35,1106.0 1741.20,1115.7 1751.04,1093.5 1760.88,1049.7 1770.73,1008.1 1780.57,1093.8 1790.42,1082.9 1800.26,1094.8 1810.10,1084.8 1819.95,1104.7 1829.79,1090.3 1839.64,1088.3 1849.48,1098.2 1859.32,1096.6 1869.17,1076.5 1879.01,1116.0 1888.86,1079.9 1898.70,1052.0 1908.54,1114.6 1918.39,1075.7 1928.23,1036.3 1938.08,1081.0 1947.92,1107.5" fill="none" stroke="#f5c35c" stroke-width="3.8" stroke-linejoin="bevel"/>
</svg>
<div class="t" style="right:1950.2px;top:722.8px;font-size:23.5px;color:#8e9096;font-weight:normal;text-align:right;">8.5K</div>
<div class="t" style="left:1962.2px;top:722.8px;font-size:23.5px;color:#8e9096;font-weight:normal;">2.1K</div>
<div class="t" style="right:1950.2px;top:799.2px;font-size:23.5px;color:#8e9096;font-weight:normal;text-align:right;">6.8K</div>
<div class="t" style="left:1962.2px;top:799.2px;font-size:23.5px;color:#8e9096;font-weight:normal;">1.6K</div>
<div class="t" style="right:1950.2px;top:875.6px;font-size:23.5px;color:#8e9096;font-weight:normal;text-align:right;">5.1K</div>
<div class="t" style="left:1962.2px;top:875.6px;font-size:23.5px;color:#8e9096;font-weight:normal;">1.2K</div>
<div class="t" style="right:1950.2px;top:952.0px;font-size:23.5px;color:#8e9096;font-weight:normal;text-align:right;">3.4K</div>
<div class="t" style="left:1962.2px;top:952.0px;font-size:23.5px;color:#8e9096;font-weight:normal;">820</div>
<div class="t" style="right:1950.2px;top:1028.4px;font-size:23.5px;color:#8e9096;font-weight:normal;text-align:right;">1.7K</div>
<div class="t" style="left:1962.2px;top:1028.4px;font-size:23.5px;color:#8e9096;font-weight:normal;">410</div>
<div class="t" style="right:1950.2px;top:1104.8px;font-size:23.5px;color:#8e9096;font-weight:normal;text-align:right;">0</div>
<div class="t" style="left:1962.2px;top:1104.8px;font-size:23.5px;color:#8e9096;font-weight:normal;">0</div>
<div class="t" style="left:188.03px;top:1132.5px;font-size:23.8px;color:#8e9096;transform-origin:0 0;transform:rotate(90deg);">Jun 9</div>
<div class="t" style="left:217.56px;top:1132.5px;font-size:23.8px;color:#8e9096;transform-origin:0 0;transform:rotate(90deg);">Jun 12</div>
<div class="t" style="left:247.09px;top:1132.5px;font-size:23.8px;color:#8e9096;transform-origin:0 0;transform:rotate(90deg);">Jun 15</div>
<div class="t" style="left:276.62px;top:1132.5px;font-size:23.8px;color:#8e9096;transform-origin:0 0;transform:rotate(90deg);">Jun 18</div>
<div class="t" style="left:306.15px;top:1132.5px;font-size:23.8px;color:#8e9096;transform-origin:0 0;transform:rotate(90deg);">Jun 21</div>
<div class="t" style="left:335.69px;top:1132.5px;font-size:23.8px;color:#8e9096;transform-origin:0 0;transform:rotate(90deg);">Jun 24</div>
<div class="t" style="left:365.22px;top:1132.5px;font-size:23.8px;color:#8e9096;transform-origin:0 0;transform:rotate(90deg);">Jun 27</div>
<div class="t" style="left:394.75px;top:1132.5px;font-size:23.8px;color:#8e9096;transform-origin:0 0;transform:rotate(90deg);">Jun 30</div>
<div class="t" style="left:424.28px;top:1132.5px;font-size:23.8px;color:#8e9096;transform-origin:0 0;transform:rotate(90deg);">Jul 3</div>
<div class="t" style="left:453.81px;top:1132.5px;font-size:23.8px;color:#8e9096;transform-origin:0 0;transform:rotate(90deg);">Jul 6</div>
<div class="t" style="left:483.35px;top:1132.5px;font-size:23.8px;color:#8e9096;transform-origin:0 0;transform:rotate(90deg);">Jul 9</div>
<div class="t" style="left:512.88px;top:1132.5px;font-size:23.8px;color:#8e9096;transform-origin:0 0;transform:rotate(90deg);">Jul 12</div>
<div class="t" style="left:542.41px;top:1132.5px;font-size:23.8px;color:#8e9096;transform-origin:0 0;transform:rotate(90deg);">Jul 15</div>
<div class="t" style="left:571.94px;top:1132.5px;font-size:23.8px;color:#8e9096;transform-origin:0 0;transform:rotate(90deg);">Jul 18</div>
<div class="t" style="left:601.47px;top:1132.5px;font-size:23.8px;color:#8e9096;transform-origin:0 0;transform:rotate(90deg);">Jul 21</div>
<div class="t" style="left:631.01px;top:1132.5px;font-size:23.8px;color:#8e9096;transform-origin:0 0;transform:rotate(90deg);">Jul 24</div>
<div class="t" style="left:660.54px;top:1132.5px;font-size:23.8px;color:#8e9096;transform-origin:0 0;transform:rotate(90deg);">Jul 27</div>
<div class="t" style="left:690.07px;top:1132.5px;font-size:23.8px;color:#8e9096;transform-origin:0 0;transform:rotate(90deg);">Jul 30</div>
<div class="t" style="left:719.60px;top:1132.5px;font-size:23.8px;color:#8e9096;transform-origin:0 0;transform:rotate(90deg);">Aug 2</div>
<div class="t" style="left:749.13px;top:1132.5px;font-size:23.8px;color:#8e9096;transform-origin:0 0;transform:rotate(90deg);">Aug 5</div>
<div class="t" style="left:778.67px;top:1132.5px;font-size:23.8px;color:#8e9096;transform-origin:0 0;transform:rotate(90deg);">Aug 8</div>
<div class="t" style="left:808.20px;top:1132.5px;font-size:23.8px;color:#8e9096;transform-origin:0 0;transform:rotate(90deg);">Aug 11</div>
<div class="t" style="left:837.73px;top:1132.5px;font-size:23.8px;color:#8e9096;transform-origin:0 0;transform:rotate(90deg);">Aug 14</div>
<div class="t" style="left:867.26px;top:1132.5px;font-size:23.8px;color:#8e9096;transform-origin:0 0;transform:rotate(90deg);">Aug 17</div>
<div class="t" style="left:896.79px;top:1132.5px;font-size:23.8px;color:#8e9096;transform-origin:0 0;transform:rotate(90deg);">Aug 20</div>
<div class="t" style="left:926.33px;top:1132.5px;font-size:23.8px;color:#8e9096;transform-origin:0 0;transform:rotate(90deg);">Aug 23</div>
<div class="t" style="left:955.86px;top:1132.5px;font-size:23.8px;color:#8e9096;transform-origin:0 0;transform:rotate(90deg);">Aug 26</div>
<div class="t" style="left:985.39px;top:1132.5px;font-size:23.8px;color:#8e9096;transform-origin:0 0;transform:rotate(90deg);">Aug 29</div>
<div class="t" style="left:1014.92px;top:1132.5px;font-size:23.8px;color:#8e9096;transform-origin:0 0;transform:rotate(90deg);">Sep 1</div>
<div class="t" style="left:1044.45px;top:1132.5px;font-size:23.8px;color:#8e9096;transform-origin:0 0;transform:rotate(90deg);">Sep 4</div>
<div class="t" style="left:1073.99px;top:1132.5px;font-size:23.8px;color:#8e9096;transform-origin:0 0;transform:rotate(90deg);">Sep 7</div>
<div class="t" style="left:1103.52px;top:1132.5px;font-size:23.8px;color:#8e9096;transform-origin:0 0;transform:rotate(90deg);">Sep 10</div>
<div class="t" style="left:1133.05px;top:1132.5px;font-size:23.8px;color:#8e9096;transform-origin:0 0;transform:rotate(90deg);">Sep 13</div>
<div class="t" style="left:1162.58px;top:1132.5px;font-size:23.8px;color:#8e9096;transform-origin:0 0;transform:rotate(90deg);">Sep 16</div>
<div class="t" style="left:1192.11px;top:1132.5px;font-size:23.8px;color:#8e9096;transform-origin:0 0;transform:rotate(90deg);">Sep 19</div>
<div class="t" style="left:1221.65px;top:1132.5px;font-size:23.8px;color:#8e9096;transform-origin:0 0;transform:rotate(90deg);">Sep 22</div>
<div class="t" style="left:1251.18px;top:1132.5px;font-size:23.8px;color:#8e9096;transform-origin:0 0;transform:rotate(90deg);">Sep 25</div>
<div class="t" style="left:1280.71px;top:1132.5px;font-size:23.8px;color:#8e9096;transform-origin:0 0;transform:rotate(90deg);">Sep 28</div>
<div class="t" style="left:1310.24px;top:1132.5px;font-size:23.8px;color:#8e9096;transform-origin:0 0;transform:rotate(90deg);">Oct 1</div>
<div class="t" style="left:1339.77px;top:1132.5px;font-size:23.8px;color:#8e9096;transform-origin:0 0;transform:rotate(90deg);">Oct 4</div>
<div class="t" style="left:1369.31px;top:1132.5px;font-size:23.8px;color:#8e9096;transform-origin:0 0;transform:rotate(90deg);">Oct 7</div>
<div class="t" style="left:1398.84px;top:1132.5px;font-size:23.8px;color:#8e9096;transform-origin:0 0;transform:rotate(90deg);">Oct 10</div>
<div class="t" style="left:1428.37px;top:1132.5px;font-size:23.8px;color:#8e9096;transform-origin:0 0;transform:rotate(90deg);">Oct 13</div>
<div class="t" style="left:1457.90px;top:1132.5px;font-size:23.8px;color:#8e9096;transform-origin:0 0;transform:rotate(90deg);">Oct 16</div>
<div class="t" style="left:1487.43px;top:1132.5px;font-size:23.8px;color:#8e9096;transform-origin:0 0;transform:rotate(90deg);">Oct 19</div>
<div class="t" style="left:1516.97px;top:1132.5px;font-size:23.8px;color:#8e9096;transform-origin:0 0;transform:rotate(90deg);">Oct 22</div>
<div class="t" style="left:1546.50px;top:1132.5px;font-size:23.8px;color:#8e9096;transform-origin:0 0;transform:rotate(90deg);">Oct 25</div>
<div class="t" style="left:1576.03px;top:1132.5px;font-size:23.8px;color:#8e9096;transform-origin:0 0;transform:rotate(90deg);">Oct 28</div>
<div class="t" style="left:1605.56px;top:1132.5px;font-size:23.8px;color:#8e9096;transform-origin:0 0;transform:rotate(90deg);">Oct 31</div>
<div class="t" style="left:1635.09px;top:1132.5px;font-size:23.8px;color:#8e9096;transform-origin:0 0;transform:rotate(90deg);">Nov 3</div>
<div class="t" style="left:1664.63px;top:1132.5px;font-size:23.8px;color:#8e9096;transform-origin:0 0;transform:rotate(90deg);">Nov 6</div>
<div class="t" style="left:1694.16px;top:1132.5px;font-size:23.8px;color:#8e9096;transform-origin:0 0;transform:rotate(90deg);">Nov 9</div>
<div class="t" style="left:1723.69px;top:1132.5px;font-size:23.8px;color:#8e9096;transform-origin:0 0;transform:rotate(90deg);">Nov 12</div>
<div class="t" style="left:1753.22px;top:1132.5px;font-size:23.8px;color:#8e9096;transform-origin:0 0;transform:rotate(90deg);">Nov 15</div>
<div class="t" style="left:1782.75px;top:1132.5px;font-size:23.8px;color:#8e9096;transform-origin:0 0;transform:rotate(90deg);">Nov 18</div>
<div class="t" style="left:1812.29px;top:1132.5px;font-size:23.8px;color:#8e9096;transform-origin:0 0;transform:rotate(90deg);">Nov 21</div>
<div class="t" style="left:1841.82px;top:1132.5px;font-size:23.8px;color:#8e9096;transform-origin:0 0;transform:rotate(90deg);">Nov 24</div>
<div class="t" style="left:1871.35px;top:1132.5px;font-size:23.8px;color:#8e9096;transform-origin:0 0;transform:rotate(90deg);">Nov 27</div>
<div class="t" style="left:1900.88px;top:1132.5px;font-size:23.8px;color:#8e9096;transform-origin:0 0;transform:rotate(90deg);">Nov 30</div>
<div class="t" style="left:1930.41px;top:1132.5px;font-size:23.8px;color:#8e9096;transform-origin:0 0;transform:rotate(90deg);">Dec 3</div>
<div class="t" style="left:1959.95px;top:1132.5px;font-size:23.8px;color:#8e9096;transform-origin:0 0;transform:rotate(90deg);">Dec 6</div>
<div style="position:absolute;left:2087px;top:1327px;width:90px;height:90px;box-sizing:border-box;border-radius:50%;background:#d05157;border:2.2px solid #fff;box-shadow:0 0 36px rgba(0,0,0,0.10);"></div>
</body></html>
